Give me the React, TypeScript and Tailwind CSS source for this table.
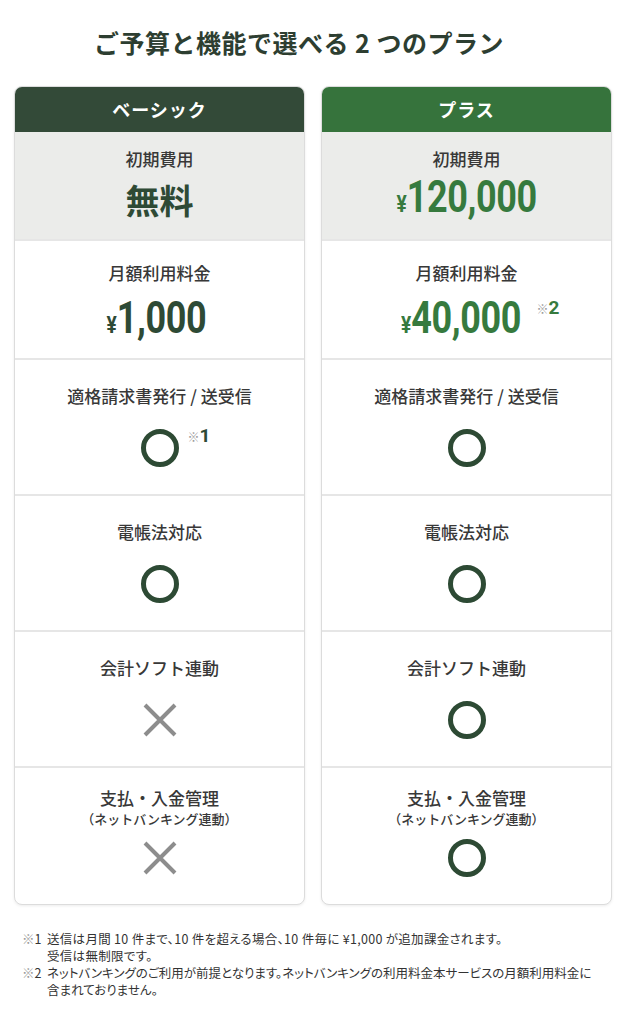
import React from "react";

const circleColor = "#2d4a34";

function Circle() {
  return (
    <svg width="40" height="40" viewBox="0 0 40 40" aria-hidden="true">
      <circle cx="20" cy="20" r="16.5" fill="none" stroke={circleColor} strokeWidth="5" />
    </svg>
  );
}

function Cross() {
  return (
    <svg width="40" height="40" viewBox="0 0 40 40" aria-hidden="true">
      <path d="M5 5 L35 35 M35 5 L5 35" stroke="#8d8d8d" strokeWidth="4" />
    </svg>
  );
}

function Price({ value, tone }: { value: string; tone: "dark" | "green" }) {
  return (
    <span
      className={
        "inline-block origin-center scale-x-[0.8] whitespace-nowrap font-['Roboto',sans-serif] font-bold leading-none " +
        (tone === "dark" ? "text-[#2e4a35]" : "text-[#367a3e]")
      }
    >
      <span className="text-[24px]">¥</span>
      <span className="text-[45px] tracking-[-0.5px]">{value}</span>
    </span>
  );
}

function Note({ n }: { n: string }) {
  return (
    <span className="absolute left-full top-[-6px] ml-[8px] whitespace-nowrap">
      <span className="text-[12px] font-normal text-[#9a9a9a]">※</span>
      <span className="font-['Roboto',sans-serif] text-[19px] font-bold text-[#2e4a35]">{n}</span>
    </span>
  );
}

function FeatureRow({ label, mark, note }: { label: string; mark: "o" | "x"; note?: string }) {
  return (
    <div className="flex h-[136px] flex-col items-center border-t-2 border-[#e6e6e6] pt-[24px]">
      <p className="text-[17px] font-medium leading-[24px] text-[#383838]">{label}</p>
      <div className="relative mt-[20px]">
        {mark === "o" ? <Circle /> : <Cross />}
        {note && <Note n={note} />}
      </div>
    </div>
  );
}

type Plan = {
  name: string;
  headerBg: string;
  initial: React.ReactNode;
  monthly: React.ReactNode;
  invoiceNote?: string;
  accounting: "o" | "x";
  banking: "o" | "x";
};

function PlanCard({ plan }: { plan: Plan }) {
  return (
    <div className="overflow-hidden rounded-[8px] border border-[#dcdcdc] bg-white shadow-[0_1px_3px_rgba(0,0,0,0.08)]">
      <div className={"flex h-[45px] items-center justify-center " + plan.headerBg}>
        <span className="text-[18px] font-bold tracking-[1px] text-white">{plan.name}</span>
      </div>
      <div className="flex h-[107px] flex-col items-center bg-[#ebecea] pt-[15px]">
        <p className="text-[17px] font-medium leading-[24px] text-[#383838]">初期費用</p>
        <div className="mt-[3px] flex h-[44px] items-center">{plan.initial}</div>
      </div>
      <div className="flex h-[119px] flex-col items-center border-t-2 border-[#e6e6e6] pt-[20px]">
        <p className="text-[17px] font-medium leading-[24px] text-[#383838]">月額利用料金</p>
        <div className="mt-[10px] flex h-[44px] items-center">{plan.monthly}</div>
      </div>
      <FeatureRow label="適格請求書発行 / 送受信" mark="o" note={plan.invoiceNote} />
      <FeatureRow label="電帳法対応" mark="o" />
      <FeatureRow label="会計ソフト連動" mark={plan.accounting} />
      <div className="flex h-[138px] flex-col items-center border-t-2 border-[#e6e6e6] pt-[18px]">
        <p className="text-[17px] font-medium leading-[24px] text-[#383838]">支払・入金管理</p>
        <p className="text-[13px] font-medium leading-[17px] text-[#383838]">（ネットバンキング連動）</p>
        <div className="mt-[11px]">{plan.banking === "o" ? <Circle /> : <Cross />}</div>
      </div>
    </div>
  );
}

const plans: Plan[] = [
  {
    name: "ベーシック",
    headerBg: "bg-[#334a38]",
    initial: <span className="mt-[8px] text-[34px] font-bold leading-none text-[#2e4a35]">無料</span>,
    monthly: (
      <span className="mr-[6px]">
        <Price value="1,000" tone="dark" />
      </span>
    ),
    invoiceNote: "1",
    accounting: "x",
    banking: "x",
  },
  {
    name: "プラス",
    headerBg: "bg-[#36733c]",
    initial: <Price value="120,000" tone="green" />,
    monthly: (
      <span className="relative mr-[10px]">
        <Price value="40,000" tone="green" />
        <span className="absolute left-full top-[-1px] whitespace-nowrap">
          <span className="text-[12px] text-[#9a9a9a]">※</span>
          <span className="font-['Roboto',sans-serif] text-[19px] font-bold text-[#367a3e]">2</span>
        </span>
      </span>
    ),
    accounting: "o",
    banking: "o",
  },
];

export default function App() {
  return (
    <div className="min-h-[1024px] w-[628px] bg-white font-['Noto_Sans_CJK_JP',sans-serif]">
      <h1 className="pr-[30px] pt-[26px] text-center text-[25px] font-bold leading-[32px] tracking-[0.5px] text-[#2d3e31]">
        ご予算と機能で選べる 2 つのプラン
      </h1>
      <div className="mt-[28px] grid grid-cols-2 gap-[16px] pl-[14px] pr-[16px]">
        {plans.map((p) => (
          <PlanCard key={p.name} plan={p} />
        ))}
      </div>
      <div className="mt-[25px] pl-[22px] text-[12.5px] leading-[17px] text-[#333] [font-feature-settings:'palt']">
        <div className="flex">
          <span className="w-[25px] shrink-0">
            <span className="text-[#999]">※</span>1
          </span>
          <p className="tracking-[0.3px]">
            送信は月間 10 件まで、10 件を超える場合、10 件毎に ¥1,000 が追加課金されます。
            <br />
            受信は無制限です。
          </p>
        </div>
        <div className="flex">
          <span className="w-[25px] shrink-0">
            <span className="text-[#999]">※</span>2
          </span>
          <p className="whitespace-nowrap">
            ネットバンキングのご利用が前提となります。ネットバンキングの利用料金本サービスの月額利用料金に
            <br />
            含まれておりません。
          </p>
        </div>
      </div>
    </div>
  );
}
